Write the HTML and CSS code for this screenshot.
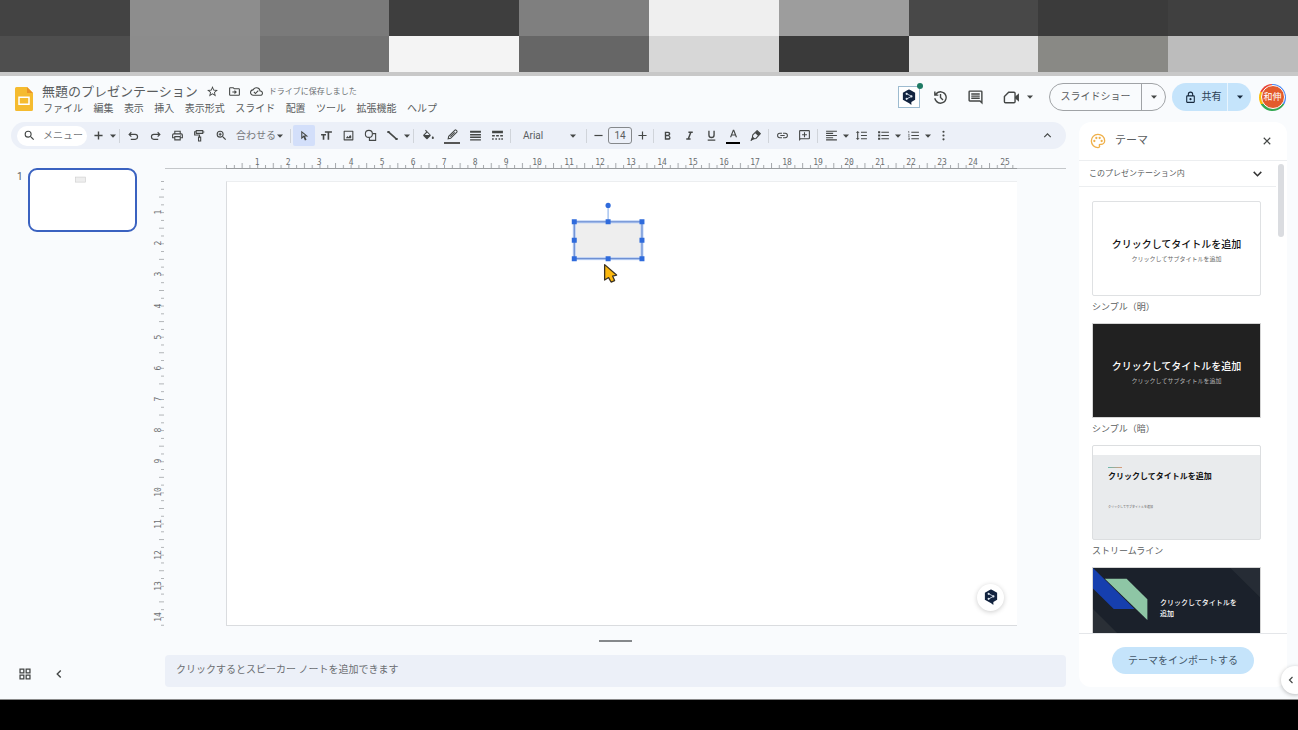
FILE: index.html
```html
<!DOCTYPE html>
<html lang="ja">
<head>
<meta charset="utf-8">
<title>無題のプレゼンテーション</title>
<link rel="stylesheet" href="styles.css">
</head>
<body>
<svg class="defs" aria-hidden="true">
  <symbol id="caret" viewBox="0 0 8 8"><path d="M1 2.500h6L4 5.800z"/></symbol>
  <symbol id="hex" viewBox="0 0 16 18"><path d="M8 0 15 4v8.200l-4.300 2.400V18L8.200 16 1 12.200V4z" fill="#12233f"/><path d="M5.300 5.300 11 8.200 5.300 11.200" fill="none" stroke="#c3cede" stroke-width="1.100"/><circle cx="5.300" cy="5.400" r="1.200" fill="#dfe7f0"/><circle cx="10.800" cy="8.300" r="1.200" fill="#dfe7f0"/><circle cx="5.300" cy="11.100" r="1.200" fill="#dfe7f0"/></symbol>
</svg>

<div class="mosaic" aria-hidden="true">
  <i class="m1"></i><i class="m2"></i><i class="m3"></i><i class="m4"></i><i class="m5"></i><i class="m6"></i><i class="m7"></i><i class="m8"></i><i class="m9"></i><i class="m10"></i>
  <i class="m11"></i><i class="m12"></i><i class="m13"></i><i class="m14"></i><i class="m15"></i><i class="m16"></i><i class="m17"></i><i class="m18"></i><i class="m19"></i><i class="m20"></i>
</div>

<div class="app">
  <header class="header">
    <svg class="logo" viewBox="0 0 18 24"><path d="M1.500 0H12l6 6v16.500a1.500 1.500 0 0 1-1.500 1.500h-15A1.500 1.500 0 0 1 0 22.500v-21A1.500 1.500 0 0 1 1.500 0z" fill="#f5bb2f"/><path d="M12 0l6 6h-6z" fill="#ea9325"/><path d="M4 10.200h10v7H4z" fill="none" stroke="#fff" stroke-width="1.500"/></svg>
    <div class="heading">
      <div class="title-row">
        <h1 class="title">無題のプレゼンテーション</h1>
        <button class="mini" aria-label="スター"><svg viewBox="0 0 24 24"><path d="M22 9.240l-7.190-.62L12 2 9.190 8.630 2 9.240l5.460 4.730L5.820 21 12 17.270 18.180 21l-1.630-7.030L22 9.240zM12 15.400l-3.760 2.270 1-4.280-3.320-2.880 4.380-.38L12 6.100l1.710 4.040 4.380.38-3.320 2.880 1 4.280L12 15.400z"/></svg></button>
        <button class="mini" aria-label="移動"><svg viewBox="0 0 24 24"><path d="M20 6h-8l-2-2H4a2 2 0 0 0-2 2v12a2 2 0 0 0 2 2h16a2 2 0 0 0 2-2V8a2 2 0 0 0-2-2zm0 12H4V6h5.200l2 2H20zM12 17l4.500-4L12 9v3H8v2h4z"/></svg></button>
        <span class="saved"><svg viewBox="0 0 24 24"><path d="M19.350 10.040A7.490 7.490 0 0 0 12 4C9.110 4 6.600 5.640 5.350 8.040A5.994 5.994 0 0 0 0 14c0 3.310 2.690 6 6 6h13c2.760 0 5-2.240 5-5 0-2.640-2.050-4.780-4.650-4.960zM19 18H6c-2.210 0-4-1.790-4-4 0-2.050 1.530-3.760 3.560-3.970l1.070-.11.5-.95A5.469 5.469 0 0 1 12 6c2.620 0 4.880 1.860 5.390 4.430l.3 1.500 1.530.11A2.980 2.980 0 0 1 22 15c0 1.650-1.350 3-3 3zm-9-3.820-2.090-2.090L6.500 13.500 10 17l6.010-6.010-1.410-1.410z"/></svg>ドライブに保存しました</span>
      </div>
      <nav class="menus">
        <button>ファイル</button><button>編集</button><button>表示</button><button>挿入</button><button>表示形式</button><button>スライド</button><button>配置</button><button>ツール</button><button>拡張機能</button><button>ヘルプ</button>
      </nav>
    </div>
    <div class="actions">
      <button class="ext" aria-label="翻訳"><svg viewBox="0 0 16 18"><use href="#hex"/></svg><span class="ext-dot"></span></button>
      <button class="act history" aria-label="変更履歴"><svg viewBox="0 0 24 24"><path d="M12 21a9 9 0 0 1-9-8h2.100A7 7 0 1 0 6.500 7.600H9v2H3v-6h2v2.700A9 9 0 1 1 12 21zm2.800-4.800L11 12.400V7h2v4.600l3.200 3.200z"/></svg></button>
      <button class="act comments" aria-label="コメント"><svg viewBox="0 0 24 24"><path d="M22 4a2 2 0 0 0-2-2H4a2 2 0 0 0-2 2v12c0 1.100.9 2 2 2h14l4 4zm-2 0v13.200L18.800 16H4V4zM6 12h12v2H6zm0-3h12v2H6zm0-3h12v2H6z"/></svg></button>
      <button class="meet" aria-label="会議"><svg class="cam" viewBox="0 0 24 24"><path d="M8 4.500h7.500a1.500 1.500 0 0 1 1.500 1.500v12a1.500 1.500 0 0 1-1.500 1.500h-12A1.500 1.500 0 0 1 2 18v-7.500z" fill="none" stroke="#444746" stroke-width="2"/><path d="M17 11l5.500-5v12L17 13z"/></svg><svg class="caret"><use href="#caret"/></svg></button>
      <div class="split show"><button class="split-main">スライドショー</button><button class="split-drop" aria-label="スライドショーのオプション"><svg class="caret"><use href="#caret"/></svg></button></div>
      <div class="split share"><button class="split-main"><svg viewBox="0 0 24 24"><path d="M18 8h-1V6A5 5 0 0 0 7 6v2H6a2 2 0 0 0-2 2v10c0 1.100.9 2 2 2h12a2 2 0 0 0 2-2V10a2 2 0 0 0-2-2zM9 6a3 3 0 0 1 6 0v2H9zm9 14H6V10h12zm-6-3a2 2 0 1 0 0-4 2 2 0 0 0 0 4z"/></svg>共有</button><button class="split-drop" aria-label="共有オプション"><svg class="caret"><use href="#caret"/></svg></button></div>
      <button class="avatar"><span>和伸</span></button>
    </div>
  </header>

  <div class="body">
    <div class="editor">
      <div class="toolbar" role="toolbar">
        <label class="search"><svg viewBox="0 0 24 24"><path d="M15.500 14h-.79l-.28-.27A6.471 6.471 0 0 0 16 9.500 6.500 6.500 0 1 0 9.500 16c1.610 0 3.090-.59 4.230-1.570l.27.28v.79l5 4.990L20.490 19zm-6 0a4.500 4.500 0 1 1 0-9 4.500 4.500 0 0 1 0 9z"/></svg><input type="text" placeholder="メニュー" aria-label="メニュー"></label>
        <button class="tb" aria-label="新しいスライド"><svg viewBox="0 0 24 24"><path d="M19.500 13.300h-6.200v6.200h-2.600v-6.200H4.500v-2.600h6.200V4.500h2.600v6.200h6.200z"/></svg></button>
        <button class="drop" aria-label="レイアウト"><svg class="caret"><use href="#caret"/></svg></button>
        <span class="sep"></span>
        <button class="tb" aria-label="元に戻す"><svg viewBox="0 0 24 24"><path d="M8 6 4 10l4 4M4.500 10H15a4.500 4.500 0 0 1 0 9H7" fill="none" stroke="#444746" stroke-width="2.200"/></svg></button>
        <button class="tb" aria-label="やり直す"><svg viewBox="0 0 24 24"><path d="M16 6l4 4-4 4M19.500 10H9a4.500 4.500 0 0 0 0 9h8" fill="none" stroke="#444746" stroke-width="2.200"/></svg></button>
        <button class="tb" aria-label="印刷"><svg viewBox="0 0 24 24"><path d="M19 8h-1V3H6v5H5a3 3 0 0 0-3 3v6h4v4h12v-4h4v-6a3 3 0 0 0-3-3zM8 5h8v3H8zm8 12v2H8v-4h8zm2-2v-2H6v2H4v-4a1 1 0 0 1 1-1h14a1 1 0 0 1 1 1v4z"/><circle cx="18" cy="11.500" r="1"/></svg></button>
        <button class="tb" aria-label="書式を貼り付け"><svg viewBox="0 0 24 24"><path d="M6 3h12v5H6zM6 5H3v6h9v4M18 5.500h3" fill="none" stroke="#444746" stroke-width="2"/><path d="M10.200 15h4v7h-4z" fill="none" stroke="#444746" stroke-width="2"/></svg></button>
        <button class="tb" aria-label="拡大"><svg viewBox="0 0 24 24"><path d="M15.500 14h-.79l-.28-.27A6.471 6.471 0 0 0 16 9.500 6.500 6.500 0 1 0 9.500 16c1.610 0 3.090-.59 4.230-1.570l.27.28v.79l5 4.990L20.490 19zm-6 0a4.500 4.500 0 1 1 0-9 4.500 4.500 0 0 1 0 9zm1-7h-2v1.700H6.800v2h1.700v1.700h2v-1.700h1.700v-2h-1.700z"/></svg></button>
        <button class="zoom"><span>合わせる</span><svg class="caret"><use href="#caret"/></svg></button>
        <span class="sep"></span>
        <button class="tb on" aria-label="選択"><svg viewBox="0 0 24 24"><path d="M6 3v16l4.200-4 2.600 6.200 3-1.300-2.700-6H19z"/><path d="M8 7.500v7l2.500-2.500h3.200z" fill="#d3dffa"/></svg></button>
        <button class="tb" aria-label="テキスト ボックス"><svg viewBox="0 0 24 24"><path d="M9 4v3h5v13h3V7h5V4zM2 12h3v8h3v-8h3V9H2z"/></svg></button>
        <button class="tb" aria-label="画像"><svg viewBox="0 0 24 24"><path d="M20 3H4a1 1 0 0 0-1 1v16a1 1 0 0 0 1 1h16a1 1 0 0 0 1-1V4a1 1 0 0 0-1-1zm-1 16H5V5h14zM7 17h10v-4l-2-2-3 4-2-2z"/></svg></button>
        <button class="tb" aria-label="図形"><svg viewBox="0 0 24 24"><path d="M16 8.500h5.500V21H10v-5" fill="none" stroke="#444746" stroke-width="2"/><circle cx="9" cy="9" r="6.500" fill="none" stroke="#444746" stroke-width="2"/></svg></button>
        <button class="tb" aria-label="線"><svg viewBox="0 0 24 24"><path d="M4 5l16 14" stroke="#444746" stroke-width="3"/><path d="M2.500 3.500h4v4h-4zM17.500 16.500h4v4h-4z"/></svg></button>
        <button class="drop" aria-label="線の種類"><svg class="caret"><use href="#caret"/></svg></button>
        <span class="sep"></span>
        <button class="tb wide" aria-label="塗りつぶしの色"><svg viewBox="0 0 24 24"><path d="M7 1.500 5.600 3l2.400 2.300-5.400 5.400a1.500 1.500 0 0 0 0 2.100l5.500 5.500c.6.600 1.500.6 2.100 0l5.500-5.500a1.500 1.500 0 0 0 0-2.100zM5 11l4.500-4.500L14 11zM20 13s-2 2.200-2 3.500a2 2 0 0 0 4 0C22 15.200 20 13 20 13z"/></svg></button>
        <button class="tb wide barred" aria-label="枠線の色"><svg viewBox="0 0 24 24"><path d="M4 20l1-4.500L16.500 4a1.500 1.500 0 0 1 2 0l1.500 1.500a1.500 1.500 0 0 1 0 2L8.500 19z" fill="none" stroke="#444746" stroke-width="2"/><path d="M8 16l8-8" stroke="#444746" stroke-width="2"/></svg><span class="bar"></span></button>
        <button class="tb" aria-label="枠線の太さ"><svg viewBox="0 0 24 24"><path d="M2 3h20v4H2zm0 6h20v3H2zm0 5h20v2.500H2zm0 5h20v2H2z"/></svg></button>
        <button class="tb" aria-label="枠線の破線"><svg viewBox="0 0 24 24"><path d="M2 3h20v5H2zm0 8h5v3H2zm7.500 0h5v3h-5zm7.500 0h5v3h-5zM2 17h3v3H2zm6 0h3v3H8zm6 0h3v3h-3zm5 0h3v3h-3z"/></svg></button>
        <span class="sep"></span>
        <button class="font"><span>Arial</span><svg class="caret"><use href="#caret"/></svg></button>
        <span class="sep"></span>
        <button class="tb narrow" aria-label="縮小"><svg viewBox="0 0 24 24"><path d="M4.500 10.900h15v2.200h-15z"/></svg></button>
        <input class="size" type="text" value="14" aria-label="フォントサイズ">
        <button class="tb narrow" aria-label="拡大する"><svg viewBox="0 0 24 24"><path d="M19.500 13.100h-6.400v6.400h-2.200v-6.400H4.500v-2.200h6.400V4.500h2.200v6.400h6.400z"/></svg></button>
        <span class="sep"></span>
        <button class="tb" aria-label="太字"><svg viewBox="0 0 24 24"><path d="M15.600 11.800c1-.7 1.600-1.800 1.600-2.800C17.200 6.700 15.500 5 13.200 5H7v15h6.900c2.100 0 3.700-1.700 3.700-3.800 0-1.500-.8-2.800-2-3.400zM9.500 7.500h3.500c.8 0 1.500.7 1.500 1.500s-.7 1.500-1.500 1.500H9.500zm3.900 9.800H9.500V13.500h3.900a1.900 1.900 0 0 1 0 3.800z"/></svg></button>
        <button class="tb" aria-label="斜体"><svg viewBox="0 0 24 24"><path d="M10 4.500v3h2.500l-3.700 9.500H6v3h8v-3h-2.300l3.700-9.500H18v-3z"/></svg></button>
        <button class="tb" aria-label="下線"><svg viewBox="0 0 24 24"><path d="M12 17a6 6 0 0 0 6-6V3h-2.500v8a3.500 3.500 0 0 1-7 0V3H6v8a6 6 0 0 0 6 6zm-7 2.500v2h14v-2z"/></svg></button>
        <button class="tb barred text-color" aria-label="文字の色"><svg viewBox="0 0 24 24"><path d="M10.900 3 5.500 17h2.400l1.100-3h6.100l1.100 3h2.400L13.200 3zm-1.200 9L12 5.800l2.300 6.200z"/></svg><span class="bar"></span></button>
        <button class="tb" aria-label="ハイライト"><svg viewBox="0 0 24 24"><path d="M15 3l6 5.500-8 9-6 1-3 2.500 2-4.500 1-5.500z" fill="none" stroke="#444746" stroke-width="2" stroke-linejoin="round"/><path d="M15 3l6 5.500-4 4.500-6-5.500zM3 21l4-7 4 4z"/></svg></button>
        <span class="sep"></span>
        <button class="tb" aria-label="リンク"><svg viewBox="0 0 24 24"><path d="M3.900 12c0-1.710 1.390-3.100 3.100-3.100h4V7H7a5 5 0 0 0 0 10h4v-1.900H7A3.100 3.100 0 0 1 3.900 12zM8 13h8v-2H8zm9-6h-4v1.900h4a3.100 3.100 0 0 1 0 6.200h-4V17h4a5 5 0 0 0 0-10z"/></svg></button>
        <button class="tb" aria-label="コメントを追加"><svg viewBox="0 0 24 24"><path d="M2 22V4a2 2 0 0 1 2-2h16a2 2 0 0 1 2 2v13a2 2 0 0 1-2 2H5zM4 4v13h16V4zm7 2h2v3.500h3.500v2H13V15h-2v-3.500H7.500v-2H11z"/></svg></button>
        <span class="sep"></span>
        <button class="tb" aria-label="配置"><svg viewBox="0 0 24 24"><path d="M2 3h20v2H2zm0 4h13v2H2zm0 4h20v2H2zm0 4h13v2H2zm0 4h20v2H2z"/></svg></button>
        <button class="drop" aria-label="配置オプション"><svg class="caret"><use href="#caret"/></svg></button>
        <button class="tb" aria-label="行間隔"><svg viewBox="0 0 24 24"><path d="M6 7h2.500L5 3.500 1.500 7H4v10H1.500L5 20.500 8.500 17H6zm5-2v2h11V5zm0 14h11v-2H11zm0-6h11v-2H11z"/></svg></button>
        <button class="tb" aria-label="箇条書き"><svg viewBox="0 0 24 24"><path d="M2 4h4v4H2zm0 6h4v4H2zm0 6h4v4H2zM8 5h14v2H8zm0 6h14v2H8zm0 6h14v2H8z"/></svg></button>
        <button class="drop" aria-label="箇条書きオプション"><svg class="caret"><use href="#caret"/></svg></button>
        <button class="tb" aria-label="番号付きリスト"><svg viewBox="0 0 24 24"><path d="M2 17h2v.5H3v1h1v.5H2v1h3v-4H2zm1-9h1V4H2v1h1zm-1 3h1.800L2 13.100v.9h3v-1H3.200L5 10.900V10H2zM8 5v2h14V5zm0 14h14v-2H8zm0-6h14v-2H8z"/></svg></button>
        <button class="drop" aria-label="番号付きオプション"><svg class="caret"><use href="#caret"/></svg></button>
        <button class="tb" aria-label="その他"><svg viewBox="0 0 24 24"><circle cx="12" cy="5" r="2"/><circle cx="12" cy="12" r="2"/><circle cx="12" cy="19" r="2"/></svg></button>
        <button class="tb hide" aria-label="メニューを非表示"><svg viewBox="0 0 24 24"><path d="M6 15l6-6 6 6" fill="none" stroke="#444746" stroke-width="2.200"/></svg></button>
      </div>

      <div class="workspace">
        <aside class="filmstrip">
          <div class="film-item"><span class="film-num">1</span><button class="film-thumb" aria-label="スライド 1"><svg viewBox="0 0 104 59"><rect x="45" y="7" width="10" height="5" fill="#eee" stroke="#ccc" stroke-width=".6"/></svg></button></div>
          <div class="film-tools">
            <button aria-label="グリッド表示"><svg viewBox="0 0 24 24"><path d="M3.500 3.500h6.500v6.500H3.500zM14 3.500h6.500v6.500H14zM3.500 14h6.500v6.500H3.500zM14 14h6.500v6.500H14z" fill="none" stroke="#444746" stroke-width="2.200"/></svg></button>
            <button aria-label="フィルムストリップを非表示"><svg viewBox="0 0 24 24"><path d="M15 6l-6 6 6 6" fill="none" stroke="#444746" stroke-width="2.400"/></svg></button>
          </div>
        </aside>

        <main class="stage">
          <div class="ruler-top">
            <svg viewBox="0 0 791 20">
              <defs><pattern id="tx" width="31.14" height="20" patternUnits="userSpaceOnUse"><path d="M.5 16v3M8.300 16v3M16.100 14v5M23.900 16v3" stroke="#a4a7ab" stroke-width="1"/></pattern></defs>
              <rect width="791" height="20" fill="url(#tx)"/><path d="M0 19.500h791" stroke="#9a9da0"/>
              <g><text x="31" y="16">1</text><text x="62" y="16">2</text><text x="93" y="16">3</text><text x="125" y="16">4</text><text x="156" y="16">5</text><text x="187" y="16">6</text><text x="218" y="16">7</text><text x="249" y="16">8</text><text x="280" y="16">9</text><text x="311" y="16">10</text><text x="343" y="16">11</text><text x="374" y="16">12</text><text x="405" y="16">13</text><text x="436" y="16">14</text><text x="467" y="16">15</text><text x="498" y="16">16</text><text x="529" y="16">17</text><text x="561" y="16">18</text><text x="592" y="16">19</text><text x="623" y="16">20</text><text x="654" y="16">21</text><text x="685" y="16">22</text><text x="716" y="16">23</text><text x="747" y="16">24</text><text x="779" y="16">25</text></g>
            </svg>
          </div>
          <div class="ruler-left">
            <svg viewBox="0 0 13 445">
              <defs><pattern id="ty" width="13" height="31.14" patternUnits="userSpaceOnUse"><path d="M9 .5h3M9 8.300h3M7 16.100h5M9 23.900h3" stroke="#b0b3b6" stroke-width="1"/></pattern></defs>
              <rect width="13" height="445" fill="url(#ty)"/>
              <g><text transform="translate(9 31) rotate(-90)">1</text><text transform="translate(9 62) rotate(-90)">2</text><text transform="translate(9 93) rotate(-90)">3</text><text transform="translate(9 125) rotate(-90)">4</text><text transform="translate(9 156) rotate(-90)">5</text><text transform="translate(9 187) rotate(-90)">6</text><text transform="translate(9 218) rotate(-90)">7</text><text transform="translate(9 249) rotate(-90)">8</text><text transform="translate(9 280) rotate(-90)">9</text><text transform="translate(9 311) rotate(-90)">10</text><text transform="translate(9 343) rotate(-90)">11</text><text transform="translate(9 374) rotate(-90)">12</text><text transform="translate(9 405) rotate(-90)">13</text><text transform="translate(9 436) rotate(-90)">14</text></g>
            </svg>
          </div>
          <div class="slide">
            <svg class="drawing" viewBox="0 0 791 445">
              <rect x="347.500" y="40" width="68" height="37" fill="#eee"/>
              <rect x="347.500" y="40" width="68" height="37" fill="none" stroke="#b9cff5" stroke-width="3"/>
              <rect x="347.500" y="40" width="68" height="37" fill="none" stroke="#6285cc" stroke-width="1"/>
              <path d="M381.500 25v14" stroke="#a9c4ef" stroke-width="1.500"/>
              <circle cx="381.500" cy="23.500" r="2.600" fill="#2f6bdc"/>
              <path d="M345 37.500h5v5h-5zM379 37.500h5v5h-5zM413 37.500h5v5h-5zM345 56h5v5h-5zM413 56h5v5h-5zM345 74.500h5v5h-5zM379 74.500h5v5h-5zM413 74.500h5v5h-5z" fill="#2f6bdc"/>
              <path d="M378 83v15.500l4-2.500 2.500 4.500 3.500-1.500-2-4.500 4-1z" fill="#fbb80f" stroke="#3b3222" stroke-width="1.300" stroke-linejoin="round"/>
            </svg>
            <button class="translate" aria-label="翻訳する"><svg viewBox="0 0 16 18"><use href="#hex"/></svg></button>
          </div>
          <div class="grip"></div>
          <textarea class="notes" rows="1" aria-label="スピーカー ノート" placeholder="クリックするとスピーカー ノートを追加できます"></textarea>
        </main>
      </div>
    </div>

    <aside class="panel">
      <div class="panel-head">
        <svg viewBox="0 0 24 24"><path d="M12 22a10 10 0 1 1 10-10.500c0 3-2.500 5.500-5.500 5.500H15c-1 0-1.300 1-.8 1.800.9 1.500-.4 3.200-2.200 3.200z" fill="none" stroke="#efb04a" stroke-width="2"/><g fill="#efb04a"><circle cx="6.500" cy="12" r="1.700"/><circle cx="9.500" cy="7.500" r="1.700"/><circle cx="14.500" cy="7.500" r="1.700"/><circle cx="17.500" cy="12" r="1.700"/></g></svg>
        <h2>テーマ</h2>
        <button aria-label="閉じる"><svg viewBox="0 0 24 24"><path d="M5.500 5.500l13 13m0-13l-13 13" stroke="#444746" stroke-width="2.200"/></svg></button>
      </div>
      <button class="section"><span>このプレゼンテーション内</span><svg viewBox="0 0 24 24"><path d="M5 9l7 7 7-7" fill="none" stroke="#333" stroke-width="2.800"/></svg></button>
      <div class="themes">
        <span class="scroll"></span>
        <figure><button class="card light"><b>クリックしてタイトルを追加</b><small>クリックしてサブタイトルを追加</small></button><figcaption>シンプル（明）</figcaption></figure>
        <figure><button class="card dark"><b>クリックしてタイトルを追加</b><small>クリックしてサブタイトルを追加</small></button><figcaption>シンプル（暗）</figcaption></figure>
        <figure><button class="card stream"><i></i><b>クリックしてタイトルを追加</b><small>クリックしてサブタイトルを追加</small></button><figcaption>ストリームライン</figcaption></figure>
        <figure><button class="card focus"><svg viewBox="0 0 169 95" preserveAspectRatio="none"><path d="M0 42l53 53H0z" fill="#2a2f36"/><path d="M139 0h30v30z" fill="#262c35"/><path d="M0 0l42 42H21L0 21z" fill="#163fae"/><path d="M12 11h22l21 21v21z" fill="#8ec6a5"/></svg><b>クリックしてタイトルを追加</b></button></figure>
      </div>
      <div class="panel-foot"><button>テーマをインポートする</button></div>
    </aside>
  </div>
  <button class="side-tab" aria-label="サイドパネルを表示"><svg viewBox="0 0 24 24"><path d="M15 6l-6 6 6 6" fill="none" stroke="#444746" stroke-width="2.400"/></svg></button>
</div>
<div class="bottom"></div>
</body>
</html>
```

FILE: styles.css
```css
* { box-sizing: border-box; }
body {
  margin: 0;
  min-height: 100vh;
  display: flex;
  flex-direction: column;
  overflow: hidden;
  font: 10px/14px Roboto, "Noto Sans CJK JP", sans-serif;
  color: #5a5d60;
  background: #000;
}
button, input, textarea { font: inherit; color: inherit; border: 0; padding: 0; margin: 0; background: none; }
button { display: flex; align-items: center; justify-content: center; white-space: nowrap; }
svg { display: block; fill: #444746; flex: none; }
.defs { position: absolute; width: 0; height: 0; }
.caret { width: 8px; height: 8px; }

.mosaic { display: grid; grid-template-columns: repeat(10, 1fr); grid-auto-rows: 36px; border-bottom: 4px solid #c8c8c8; }
.m1 { background: #434343; } .m2 { background: #8d8d8d; } .m3 { background: #7a7a7a; } .m4 { background: #3e3e3e; } .m5 { background: #7f7f7f; }
.m6 { background: #efefef; } .m7 { background: #9d9d9d; } .m8 { background: #484848; } .m9 { background: #3b3b3b; } .m10 { background: #404040; }
.m11 { background: #4e4e4e; } .m12 { background: #8c8c8c; } .m13 { background: #727272; } .m14 { background: #f4f4f4; } .m15 { background: #666; }
.m16 { background: #d7d7d7; } .m17 { background: #3a3a3a; } .m18 { background: #e1e1e1; } .m19 { background: #898985; } .m20 { background: #bcbcbc; }

.app { position: relative; flex: 1; display: flex; flex-direction: column; background: #f9fbfd; overflow: hidden; }
.bottom { height: 31px; background: #000; border-top: 1px solid #8a8a8a; }

.header { display: flex; align-items: flex-start; height: 46px; padding: 7px 12px 0 15px; }
.logo { width: 18px; height: 24px; margin: 4px 9px 0 0; }
.heading { flex: 1; }
.title-row { display: flex; align-items: center; height: 17px; }
.title { margin: 0 8px 0 0; font-size: 13px; font-weight: 400; line-height: 18px; }
.mini { width: 14px; height: 14px; margin-right: 8px; }
.mini svg, .saved svg { width: 13px; height: 13px; }
.saved { display: flex; align-items: center; gap: 6px; font-size: 8px; color: #6b6e72; }
.menus { display: flex; justify-content: space-between; width: 394px; height: 18px; margin-left: 1px; }

.actions { display: flex; align-items: center; height: 28px; }
.ext { position: relative; width: 22px; height: 22px; border: 1px solid #9dbbd0; background: #fff; margin-right: 10px; }
.ext svg { width: 14px; height: 16px; }
.ext-dot { position: absolute; top: -4px; right: -4px; width: 6px; height: 6px; border-radius: 50%; background: #1f7a64; }
.act { width: 20px; height: 28px; }
.act svg { width: 17px; height: 17px; }
.history { margin-right: 15px; }
.comments { margin-right: 18px; }
.meet { gap: 6px; margin-right: 15px; }
.cam { width: 17px; height: 17px; }
.split { display: flex; height: 28px; border-radius: 14px; overflow: hidden; }
.split-main { gap: 5px; }
.show { border: 1px solid #a0a3a6; margin-right: 6px; }
.show .split-main { width: 91px; }
.show .split-drop { width: 24px; border-left: 1px solid #a0a3a6; }
.share { background: #c5e4fb; margin-right: 8px; color: #2b3f54; }
.share svg { fill: #16283c; }
.share .split-main { width: 55px; padding-left: 6px; }
.share .split-main svg { width: 13px; height: 13px; }
.share .split-drop { width: 24px; border-left: 1px solid #e9f5fe; }
.avatar { width: 27px; height: 27px; border-radius: 50%; background: conic-gradient(#4285f4 0 33%, #34a853 33% 66%, #fbbc04 66% 82%, #ea4335 82%); }
.avatar span { width: 24px; height: 24px; border: 1px solid #fff; border-radius: 50%; background: #e35b2c; color: #fff; font-size: 9px; line-height: 22px; }

.body { flex: 1; display: flex; gap: 13px; padding-right: 11px; min-height: 0; }
.editor { flex: 1; min-width: 0; display: flex; flex-direction: column; }
.toolbar { display: flex; align-items: center; height: 27px; margin-left: 11px; padding: 0 8px 0 6px; border-radius: 14px; background: #ecf0f8; }
.toolbar > * { flex: none; }
.search { display: flex; align-items: center; gap: 7px; width: 70px; height: 20px; padding-left: 6px; border-radius: 10px; background: #fff; }
.search svg { width: 13px; height: 13px; }
.search input { width: 42px; outline: 0; }
.search input::placeholder { color: #77797c; opacity: 1; }
.tb { position: relative; width: 22px; height: 21px; border-radius: 2px; }
.tb svg { width: 13px; height: 13px; }
.wide { width: 24px; }
.narrow { width: 18px; }
.on { background: #d3dffa; }
.barred svg { margin-bottom: 2px; }
.bar { position: absolute; left: 4px; right: 4px; bottom: 2px; height: 2px; background: #555; }
.text-color .bar { background: #000; }
.drop { width: 8px; height: 21px; }
.sep { width: 1px; height: 14px; margin: 0 2px; background: #d0d4da; }
.zoom { width: 56px; padding: 0 4px; justify-content: space-between; color: #77797c; }
.font { width: 71px; padding: 0 7px 0 10px; justify-content: space-between; }
.size { width: 24px; height: 17px; margin: 0 1px; border: 1px solid #85888b; border-radius: 3px; text-align: center; }
.hide { margin-left: auto; }

.workspace { flex: 1; display: flex; min-height: 0; }
.filmstrip { width: 152px; display: flex; flex-direction: column; justify-content: space-between; padding: 19px 15px 17px 17px; }
.film-item { display: flex; gap: 5px; }
.film-num { width: 6px; line-height: 18px; }
.film-thumb { flex: none; width: 109px; height: 64px; border: 2px solid #3a62c0; border-radius: 9px; background: #fff; }
.film-thumb svg { width: 100%; }
.film-tools { display: flex; gap: 18px; }
.film-tools button { width: 16px; height: 16px; }
.film-tools svg { width: 14px; height: 14px; }

.stage { flex: 1; min-width: 0; display: grid; grid-template-columns: 13px 61px 1fr 49px; grid-template-rows: 20px 12px auto 1fr 32px; padding-bottom: 12px; }
.ruler-top { grid-column: 2 / 5; grid-row: 1; padding: 0 49px 0 61px; border-bottom: 1px solid #c4c7ca; }
.ruler-top svg, .ruler-left svg { width: 100%; overflow: visible; }
.stage text { font-family: "DejaVu Sans Mono", monospace; font-size: 8px; text-anchor: middle; fill: #6b6e71; }
.ruler-left { grid-column: 1; grid-row: 3; }
.slide { grid-column: 3; grid-row: 3; position: relative; aspect-ratio: 16 / 9; background: #fff; border: solid #dadcdf; border-width: 1px 0 1px 1px; border-top-color: #eceef0; }
.drawing { position: absolute; inset: 0; width: 100%; height: 100%; }
.translate { position: absolute; right: 13px; bottom: 14px; width: 27px; height: 27px; border-radius: 50%; background: #fff; box-shadow: 0 1px 5px #0003; }
.translate svg { width: 14px; height: 16px; }
.grip { grid-column: 2 / 5; grid-row: 4; justify-self: center; align-self: center; width: 33px; height: 2px; background: #85888b; }
.notes { grid-column: 2 / 5; grid-row: 5; height: 32px; width: 100%; padding: 8px 11px; border-radius: 4px; background: #ecf0f8; resize: none; outline: 0; display: block; overflow: hidden; }
.notes::placeholder { color: #6b6e72; opacity: 1; }

.panel { width: 208px; display: flex; flex-direction: column; margin-bottom: 12px; border-radius: 12px; background: #fff; }
.panel-head, .section, .panel-foot { flex: none; }
.panel-head { display: flex; align-items: center; height: 39px; padding: 0 12px 0 11px; border-bottom: 1px solid #eceef0; }
.panel-head > svg { width: 16px; height: 16px; margin-right: 9px; }
.panel-head h2 { flex: 1; margin: 0; font-size: 11px; font-weight: 400; }
.panel-head button { width: 16px; height: 16px; }
.panel-head button svg { width: 12px; height: 12px; }
.section { justify-content: space-between; height: 26px; margin-right: 11px; padding: 0 12px 0 10px; border-bottom: 1px solid #eceef0; font-size: 8px; }
.section svg { width: 13px; height: 13px; }
.themes { position: relative; flex: 1 1 0; min-height: 0; padding: 14px 26px 0 13px; clip-path: inset(-25px 0 0 0); }
.scroll { position: absolute; top: -23px; right: 3px; width: 6px; height: 73px; border-radius: 3px; background: #dadce0; }
figure { margin: 0; height: 122px; }
figcaption { height: 22px; line-height: 22px; font-size: 9px; }
.card { position: relative; width: 100%; aspect-ratio: 169 / 95; flex-direction: column; overflow: hidden; }
.card b { font-size: 10px; line-height: 15px; font-weight: 500; }
.card small { font-size: 6px; line-height: 14px; }
.light { border: 1px solid #dfe1e3; border-radius: 2px; color: #111; padding-top: 6px; }
.light small { color: #666; }
.dark { background: #212121; border: 1px solid #d5d5d5; color: #fff; padding-top: 6px; }
.dark small { color: #b5b5b5; }
.stream { align-items: flex-start; justify-content: flex-start; padding: 21px 15px; border: 1px solid #dcdee0; border-radius: 2px; color: #111; background: linear-gradient(#fff 9px, #e9ebed 9px); }
.stream i { width: 14px; height: 1px; background: linear-gradient(90deg, #68b8ae, #dd9a78); }
.stream b { font-size: 8px; line-height: 18px; font-weight: 700; }
.stream small { margin-top: 14px; font-size: 3px; line-height: 14px; color: #555; }
.focus { align-items: flex-start; justify-content: flex-start; padding: 30px 18px 0 67px; background: #1b212b; color: #fff; border: 1px solid #d5d5d5; }
.focus svg { position: absolute; inset: 0; width: 100%; height: 100%; }
.focus b { font-size: 7px; line-height: 11px; white-space: normal; text-align: left; }
.panel-foot { display: flex; justify-content: center; align-items: center; height: 54px; border-top: 1px solid #e4e6e9; }
.panel-foot button { width: 142px; height: 27px; border-radius: 14px; background: #c5e4fb; color: #44586b; }
.side-tab { position: absolute; right: -11px; bottom: 5px; width: 28px; height: 28px; padding-right: 8px; border-radius: 50%; background: #fff; box-shadow: 0 1px 4px #0004; }
.side-tab svg { width: 12px; height: 12px; }
```
